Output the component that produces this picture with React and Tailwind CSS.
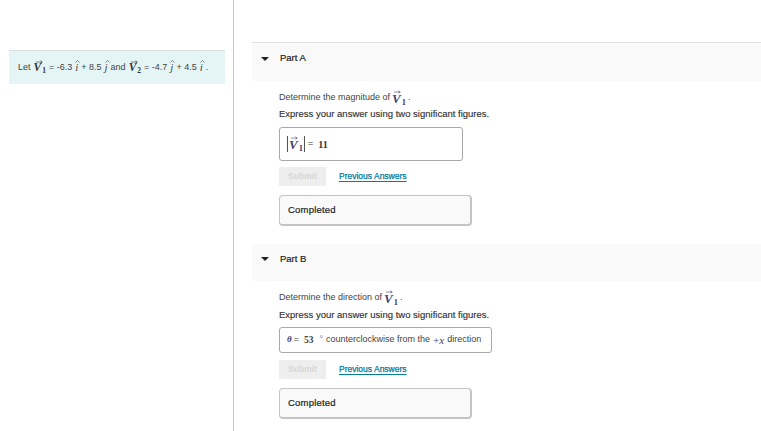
import React from "react";

/* ---------------- Math bits ---------------- */
const Vec = ({ sub, color = "text-[#333]", big }) => (
  <span className={`relative inline-block font-['Liberation_Serif',serif] italic font-bold leading-none ${big ? "text-[13px]" : "text-[11.5px]"} ${color}`}>
    <svg width="7" height="4" viewBox="0 0 7 4" className="absolute left-[2px] top-[-2px]">
      <path d="M0 2h6M4.4.7 6.3 2 4.4 3.3" fill="none" stroke="currentColor" strokeWidth="0.6" />
    </svg>
    V
    <span className={`not-italic relative top-[2px] ml-[1px] ${big ? "text-[8.5px]" : "text-[7.5px]"}`}>{sub}</span>
  </span>
);

const Hat = ({ ch }) => (
  <span className="relative inline-block font-['Liberation_Serif',serif] italic text-[11px] leading-none">
    <svg width="5" height="3" viewBox="0 0 5 3" className="absolute left-[0px] top-[-2px]">
      <path d="M.5 2.5 2.5.5l2 2" fill="none" stroke="currentColor" strokeWidth="0.6" />
    </svg>
    {ch}
  </span>
);

const Triangle = () => (
  <svg width="8" height="4" viewBox="0 0 8 4" className="shrink-0">
    <path d="M0 0h8L4 4z" fill="#222" />
  </svg>
);

const PartHeader = ({ title, className }) => (
  <div className={`flex items-center bg-[#f9f9f9] pl-[9px] gap-[11px] text-[9.5px] text-[#222] [-webkit-text-stroke:0.2px_#222] ${className}`}>
    <Triangle />
    <span>{title}</span>
  </div>
);

const Actions = ({ className }) => (
  <div className={`flex items-center gap-[13px] ${className}`}>
    <button className="w-[47px] h-[19px] bg-[#eeeeee] text-[#d6d6d6] text-[8.5px] font-bold">Submit</button>
    <a className="text-[#007c9e] text-[8.5px] underline underline-offset-2 [-webkit-text-stroke:0.25px_#007c9e]">Previous Answers</a>
  </div>
);

const Completed = () => (
  <div className="mt-[9px] w-[193px] h-[31px] pl-[8px] pt-[8px] bg-[#f9f9f9] border border-[#c4c4c4] border-b-2 border-r-2 rounded-[4px] text-[9.5px] text-[#222] [-webkit-text-stroke:0.2px_#222] tracking-[0.2px] leading-[11px]">
    Completed
  </div>
);

export default function App() {
  return (
    <div className="flex w-[761px] h-[431px] overflow-hidden bg-white font-['Liberation_Sans',Arial,sans-serif]">
      {/* left panel */}
      <div className="w-[234px] h-full shrink-0 border-r border-[#c8c8c8] pt-[50px] pl-[9px]">
        <div className="w-[216px] h-[34px] bg-[#e5f5f6] border-t border-[#d9dfe0] flex items-center pl-[9px] gap-[3px] text-[9px] text-[#444] whitespace-nowrap">
          <span>Let</span> <Vec sub="1" />
          <span>= -6.3</span> <Hat ch="i" />
          <span>+ 8.5</span> <Hat ch="j" />
          <span>and</span> <Vec sub="2" />
          <span>= -4.7</span> <Hat ch="j" />
          <span>+ 4.5</span> <Hat ch="i" />
          <span>.</span>
        </div>
      </div>

      {/* right panel */}
      <div className="flex-1 pl-[18px] pt-[42px]">
        <PartHeader title="Part A" className="h-[39px] border-t border-[#e0e0e0] pb-[7px]" />
        <div className="pl-[27px]">
          <p className="mt-[10px] h-[14px] flex items-center gap-[2px] text-[9px] text-[#444] whitespace-nowrap">
            Determine the magnitude of <Vec big sub="1" color="text-[#44406e]" />.
          </p>
          <p className="mt-[3px] text-[9.5px] leading-[12px] text-[#333] [-webkit-text-stroke:0.15px_#333] whitespace-nowrap">
            Express your answer using two significant figures.
          </p>
          <div className="mt-[7px] w-[184px] h-[34px] flex items-center pl-[7px] border border-[#a8a8a8] rounded-[3px] font-['Liberation_Serif',serif] text-[10px] font-bold text-[#333]">
            <span className="border-x border-[#555] px-[1px] h-[16px] flex items-center"><Vec big sub="1" color="text-[#44406e]" /></span>
            <span className="ml-[3px] font-normal text-[9px] font-['Liberation_Sans',sans-serif]">=</span>
            <span className="ml-[5px]">11</span>
          </div>
          <Actions className="mt-[6px]" />
          <Completed />
        </div>

        <div className="mt-[18px]">
          <PartHeader title="Part B" className="h-[37px] pb-[7px]" />
        </div>
        <div className="pl-[27px]">
          <p className="mt-[10px] h-[14px] flex items-center gap-[2px] text-[9px] text-[#444] whitespace-nowrap">
            Determine the direction of <Vec big sub="1" color="text-[#44406e]" />.
          </p>
          <p className="mt-[4px] text-[9.5px] leading-[12px] text-[#333] [-webkit-text-stroke:0.15px_#333] whitespace-nowrap">
            Express your answer using two significant figures.
          </p>
          <div className="mt-[6px] w-[213px] h-[26px] flex items-center pl-[7px] border border-[#a8a8a8] rounded-[3px] text-[9px] text-[#444] whitespace-nowrap">
            <span className="font-['Liberation_Serif',serif] italic font-bold text-[#44406e]">θ</span>
            <span className="ml-[2px]">=</span>
            <span className="ml-[5px] font-['Liberation_Serif',serif] font-bold text-[9.5px]">53</span>
            <span className="ml-[6px] mr-[3px] text-[#777]">°</span>
            <span>counterclockwise from the</span>
            <span className="mx-[3px] font-['Liberation_Serif',serif] text-[#44406e] text-[11px]">+<i>x</i></span>
            <span>direction</span>
          </div>
          <Actions className="mt-[7px]" />
          <Completed />
        </div>
      </div>
    </div>
  );
}
